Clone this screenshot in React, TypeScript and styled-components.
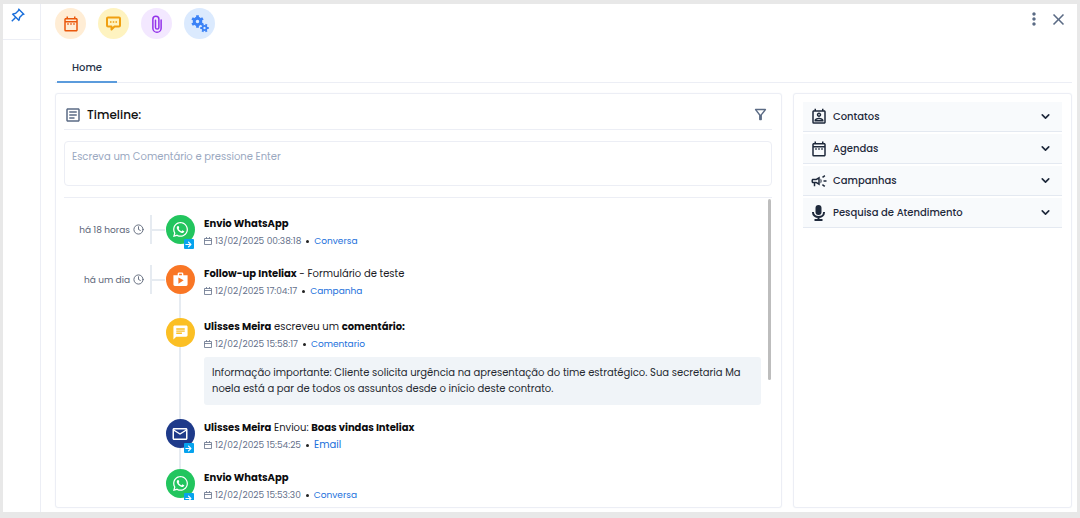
import React, { useRef, useState } from 'react';
import styled, { createGlobalStyle, css } from 'styled-components';
import { MdOutlineDateRange, MdOutlineArticle, MdOutlinePermContactCalendar, MdOutlineCampaign, MdShop, MdChat, MdMailOutline, MdMoreVert, MdClose, MdOutlineFilterAlt } from 'react-icons/md';
import { FaWhatsapp, FaArrowRight } from 'react-icons/fa';
import { RiPushpinLine } from 'react-icons/ri';
import { FiClock, FiChevronDown } from 'react-icons/fi';

const line = '#eceef5';

const GlobalStyle = createGlobalStyle`
  * { box-sizing: border-box; }
  body { margin: 0; background: #e8e8e8; font-family: Poppins, Inter, "Open Sans", sans-serif; font-size: 10px; line-height: 16px; color: #1b1b1f; }
  button { font: inherit; color: inherit; border: 0; background: none; padding: 0; cursor: pointer; }
  a { color: #1a6fdb; text-decoration: none; }
  h2, p { margin: 0; }
  svg { display: block; flex: none; }
`;

const Frame = styled.div`
  display: flex;
  height: 100vh;
  padding: 4px 3px 6px;
`;

const Rail = styled.aside`
  flex: 0 0 38px;
  background: #fff;
  border-right: 1px solid ${line};
`;

const PinButton = styled.button`
  display: flex;
  justify-content: center;
  width: 100%;
  height: 36px;
  padding: 3px 8px 0 0;
  border-bottom: 1px solid ${line};
  color: #1a6fdb;
`;

const Main = styled.main`
  flex: 1;
  min-width: 0;
  display: flex;
  flex-direction: column;
  padding: 4px 5px 4px 14px;
  background: #fff;
`;

const Toolbar = styled.header`
  display: flex;
  justify-content: space-between;
  align-items: flex-start;
`;

const ToolGroup = styled.div`
  display: flex;
  gap: 12px;
`;

const RoundButton = styled.button<{ $bg: string; $fg: string }>`
  display: flex;
  align-items: center;
  justify-content: center;
  width: 31px;
  height: 31px;
  border-radius: 50%;
  background: ${(p) => p.$bg};
  color: ${(p) => p.$fg};
`;

const WindowActions = styled.div`
  display: flex;
  gap: 5px;
  padding: 1px 4px 0 0;
  color: #5b6b85;
`;

const Tabs = styled.nav`
  display: flex;
  margin: 13px 0 10px;
  padding-left: 2px;
  border-bottom: 1px solid ${line};
`;

const Tab = styled.button`
  width: 60px;
  height: 31px;
  margin-bottom: -1px;
  padding-top: 2px;
  border-bottom: 2px solid #5b9bdc;
  color: #273248;
  font-weight: 500;
`;

const Columns = styled.div`
  flex: 1;
  min-height: 0;
  display: grid;
  grid-template-columns: minmax(0, 727fr) minmax(0, 279fr);
  gap: 11px;
`;

const Panel = styled.section`
  display: flex;
  flex-direction: column;
  min-height: 0;
  padding: 7px 9px 7px 8px;
  border: 1px solid ${line};
  border-radius: 3px;
  box-shadow: 0 0 1px #e6e9f2;
`;

const PanelHead = styled.div`
  display: flex;
  align-items: center;
  gap: 5px;
  height: 29px;
  padding-bottom: 1px;
  border-bottom: 1px solid ${line};
  color: #5b6b85;
`;

const PanelTitle = styled.h2`
  flex: 1;
  font-size: 12px;
  font-weight: 500;
  color: #111;
`;

const FilterButton = styled.button`
  margin-right: 3px;
`;

const CommentBox = styled.textarea`
  display: block;
  width: 100%;
  height: 45px;
  margin: 11px 0;
  padding: 7px;
  resize: none;
  border: 1px solid ${line};
  border-radius: 4px;
  font: inherit;
  &::placeholder { color: #9aa8bf; opacity: 1; }
`;

const Scroller = styled.div`
  position: relative;
  flex: 1;
  min-height: 0;
  display: flex;
  border-top: 1px solid ${line};
`;

const List = styled.div`
  flex: 1;
  min-width: 0;
  overflow-y: auto;
  scrollbar-width: none;
  padding: 17px 11px 0 0;
`;

const Thumb = styled.div`
  position: absolute;
  top: 1px;
  right: 1px;
  width: 3px;
  height: 60%;
  border-radius: 2px;
  background: #bdbdbd;
`;

const Entry = styled.article<{ $gap: number }>`
  display: grid;
  grid-template-columns: 80px 21px 30px minmax(0, 1fr);
  padding-bottom: ${(p) => p.$gap}px;
`;

const When = styled.div`
  display: flex;
  align-items: center;
  justify-content: flex-end;
  gap: 3px;
  height: 29px;
  font-size: 9px;
  color: #5b6577;
`;

const Branch = styled.div<{ $shown: boolean }>`
  display: flex;
  align-items: center;
  height: 29px;
  margin-left: 6px;
  ${(p) => p.$shown && css`
    border-left: 2px solid #e6ebf1;
    &::after { content: ''; flex: 1; height: 2px; background: #e6ebf1; }
  `}
`;

const Track = styled.div<{ $linked: boolean; $gap: number }>`
  display: flex;
  flex-direction: column;
  align-items: center;
  ${(p) => p.$linked && css`
    margin-bottom: -${p.$gap}px;
    &::after { content: ''; flex: 1; width: 2px; background: #e6ebf1; }
  `}
`;

const Dot = styled.div<{ $bg: string }>`
  position: relative;
  display: flex;
  align-items: center;
  justify-content: center;
  width: 29px;
  height: 29px;
  border-radius: 50%;
  background: ${(p) => p.$bg};
  color: #fff;
`;

const SentBadge = styled.span`
  position: absolute;
  right: 1px;
  bottom: -5px;
  display: flex;
  align-items: center;
  justify-content: center;
  width: 10px;
  height: 10px;
  border-radius: 1px;
  background: #06a3ee;
`;

const Content = styled.div`
  padding-left: 9px;
`;

const Headline = styled.p`
  padding-top: 1px;
  strong { font-weight: 700; color: #0c0c0e; }
`;

const Meta = styled.p`
  display: flex;
  align-items: center;
  height: 18px;
  gap: 3px;
  font-size: 9px;
  color: #64708a;
`;

const Bullet = styled.span`
  width: 3px;
  height: 3px;
  margin: 0 2px;
  border-radius: 50%;
  background: #222;
`;

const KindLink = styled.a<{ $large?: boolean }>`
  font-size: ${(p) => (p.$large ? '10px' : '9px')};
`;

const Note = styled.p`
  margin-top: 4px;
  padding: 8px 16px 8px 8px;
  border-radius: 3px;
  background: #f0f4f8;
  color: #262a31;
  word-break: break-all;
`;

const Sections = styled.div`
  display: flex;
  flex-direction: column;
  gap: 2px;
  padding: 1px 0 0 1px;
`;

const Section = styled.button`
  display: flex;
  align-items: center;
  gap: 6px;
  height: 30px;
  padding: 0 10px 0 7px;
  background: #f8fafc;
  border-bottom: 1px solid #e4e9f1;
  color: #1e293b;
  font-weight: 500;
  text-align: left;
`;

const SectionName = styled.span`
  flex: 1;
`;

const SectionIcon = styled.span`
  display: flex;
  justify-content: center;
  width: 17px;
`;

const teeth = [0, 60, 120, 180, 240, 300];

const Gears = () => (
  <svg width="18" height="18" viewBox="0 0 36 36" fill="none" stroke="currentColor" aria-hidden="true">
    <g transform="translate(13 13)">
      <circle r="6.500" strokeWidth="6" />
      {teeth.map((a) => <path key={a} d="M0-8V-12.500" strokeWidth="5.500" transform={`rotate(${a})`} />)}
    </g>
    <g transform="translate(27 26)">
      <circle r="4.200" strokeWidth="3.600" />
      {teeth.map((a) => <path key={a} d="M0-5V-8.500" strokeWidth="4" transform={`rotate(${a + 30})`} />)}
    </g>
  </svg>
);

const Speech = () => (
  <svg width="17" height="17" viewBox="0 0 17 17" fill="none" stroke="currentColor" strokeWidth="2" strokeLinejoin="round" aria-hidden="true">
    <path d="M3 2.500h11a1 1 0 0 1 1 1v7a1 1 0 0 1-1 1H9.500L6.500 14.500v-3H3a1 1 0 0 1-1-1v-7a1 1 0 0 1 1-1z" />
    <path d="M5 7h1.500M7.750 7h1.500M10.500 7H12" strokeWidth="1.500" />
  </svg>
);

const Clip = () => (
  <svg width="18" height="18" viewBox="0 0 24 24" fill="none" stroke="currentColor" strokeWidth="2" strokeLinecap="round" aria-hidden="true">
    <path d="M17.500 6.500v11a5.500 5.500 0 0 1-11 0V5.500a4 4 0 0 1 8 0v11a2.250 2.250 0 0 1-4.500 0V7" />
  </svg>
);

const Microphone = () => (
  <svg width="17" height="18" viewBox="0 0 17 18" fill="none" stroke="currentColor" strokeWidth="2" aria-hidden="true">
    <rect x="5.500" y="1" width="6" height="10" rx="3" fill="currentColor" stroke="none" />
    <path d="M3 8v.5a5.500 4.500 0 0 0 11 0V8M8.500 13v3M4.500 16h8" />
  </svg>
);

const DateIcon = () => (
  <svg width="8" height="8" viewBox="0 0 8 8" fill="none" stroke="currentColor" strokeWidth="1" aria-hidden="true">
    <path d="M.5 1.500h7v6h-7zM.5 3.500h7M2.500 0v1.500M5.500 0v1.500" opacity=".8" />
  </svg>
);

type Item = {
  when?: string;
  color: string;
  icon: React.ReactNode;
  sent?: boolean;
  linked?: boolean;
  gap?: number;
  title: React.ReactNode;
  date: string;
  kind: string;
  largeKind?: boolean;
  note?: string;
};

const items: Item[] = [
  { when: 'há 18 horas', color: '#22c55e', icon: <FaWhatsapp size={17} />, sent: true, title: <strong>Envio WhatsApp</strong>, date: '13/02/2025 00:38:18', kind: 'Conversa' },
  { when: 'há um dia', color: '#f97625', icon: <MdShop size={17} />, linked: true, gap: 18, title: <><strong>Follow-up Inteliax</strong> - Formulário de teste</>, date: '12/02/2025 17:04:17', kind: 'Campanha' },
  { color: '#fbbf24', icon: <MdChat size={17} />, linked: true, gap: 14, title: <><strong>Ulisses Meira</strong> escreveu um <strong>comentário:</strong></>, date: '12/02/2025 15:58:17', kind: 'Comentario', note: 'Informação importante: Cliente solicita urgência na apresentação do time estratégico. Sua secretaria Manoela está a par de todos os assuntos desde o início deste contrato.' },
  { color: '#1e3a8a', icon: <MdMailOutline size={18} />, sent: true, linked: true, title: <><strong>Ulisses Meira</strong> Enviou: <strong>Boas vindas Inteliax</strong></>, date: '12/02/2025 15:54:25', kind: 'Email', largeKind: true },
  { color: '#22c55e', icon: <FaWhatsapp size={17} />, sent: true, title: <strong>Envio WhatsApp</strong>, date: '12/02/2025 15:53:30', kind: 'Conversa' },
];

const sections = [
  { name: 'Contatos', icon: <MdOutlinePermContactCalendar size={18} /> },
  { name: 'Agendas', icon: <MdOutlineDateRange size={18} /> },
  { name: 'Campanhas', icon: <MdOutlineCampaign size={18} /> },
  { name: 'Pesquisa de Atendimento', icon: <Microphone /> },
];

export default function App() {
  const list = useRef<HTMLDivElement>(null);
  const [shift, setShift] = useState(0);
  const onScroll = () => {
    const el = list.current;
    if (!el) return;
    const range = el.scrollHeight - el.clientHeight;
    setShift(range > 0 ? (el.scrollTop / range) * el.clientHeight * 0.4 : 0);
  };

  return (
    <>
      <GlobalStyle />
      <Frame>
        <Rail>
          <PinButton aria-label="Fixar"><RiPushpinLine size={17} /></PinButton>
        </Rail>
        <Main>
          <Toolbar>
            <ToolGroup>
              <RoundButton $bg="#ffedd5" $fg="#ea580c" aria-label="Agenda"><MdOutlineDateRange size={18} /></RoundButton>
              <RoundButton $bg="#fef3c0" $fg="#f0a010" aria-label="Comentário"><Speech /></RoundButton>
              <RoundButton $bg="#f3e8ff" $fg="#9333ea" aria-label="Anexo"><Clip /></RoundButton>
              <RoundButton $bg="#dbeafe" $fg="#3b82f6" aria-label="Configurações"><Gears /></RoundButton>
            </ToolGroup>
            <WindowActions>
              <button aria-label="Mais opções"><MdMoreVert size={20} /></button>
              <button aria-label="Fechar"><MdClose size={19} /></button>
            </WindowActions>
          </Toolbar>
          <Tabs><Tab>Home</Tab></Tabs>
          <Columns>
            <Panel>
              <PanelHead>
                <MdOutlineArticle size={18} />
                <PanelTitle>Timeline:</PanelTitle>
                <FilterButton aria-label="Filtrar"><MdOutlineFilterAlt size={17} /></FilterButton>
              </PanelHead>
              <CommentBox aria-label="Comentário" placeholder="Escreva um Comentário e pressione Enter" />
              <Scroller>
                <List ref={list} onScroll={onScroll}>
                  {items.map((item) => {
                    const gap = item.gap ?? 15;
                    return (
                      <Entry key={item.date} $gap={gap}>
                        <When>{item.when && <>{item.when}<FiClock size={11} strokeWidth={2} /></>}</When>
                        <Branch $shown={!!item.when} />
                        <Track $linked={!!item.linked} $gap={gap}>
                          <Dot $bg={item.color}>
                            {item.icon}
                            {item.sent && <SentBadge><FaArrowRight size={7} /></SentBadge>}
                          </Dot>
                        </Track>
                        <Content>
                          <Headline>{item.title}</Headline>
                          <Meta>
                            <DateIcon />
                            {item.date}
                            <Bullet />
                            <KindLink href="#" $large={item.largeKind}>{item.kind}</KindLink>
                          </Meta>
                          {item.note && <Note>{item.note}</Note>}
                        </Content>
                      </Entry>
                    );
                  })}
                </List>
                <Thumb style={{ transform: `translateY(${shift}px)` }} />
              </Scroller>
            </Panel>
            <Panel>
              <Sections>
                {sections.map((s) => (
                  <Section key={s.name} aria-expanded={false}>
                    <SectionIcon>{s.icon}</SectionIcon>
                    <SectionName>{s.name}</SectionName>
                    <FiChevronDown size={13} strokeWidth={3} />
                  </Section>
                ))}
              </Sections>
            </Panel>
          </Columns>
        </Main>
      </Frame>
    </>
  );
}
